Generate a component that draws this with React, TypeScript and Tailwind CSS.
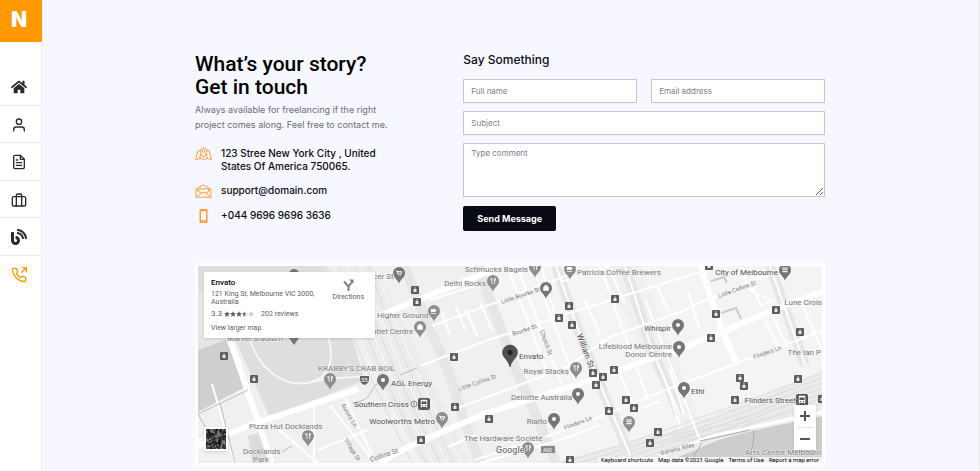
import React from "react";
import { FiBriefcase, FiFileText, FiPhoneOutgoing, FiUser } from "react-icons/fi";
import { FaBlog, FaHome } from "react-icons/fa";

const navItems = [
  { label: "Home", href: "#home", icon: FaHome },
  { label: "About", href: "#about", icon: FiUser },
  { label: "Resume", href: "#resume", icon: FiFileText },
  { label: "Portfolio", href: "#portfolio", icon: FiBriefcase },
  { label: "Blog", href: "#blog", icon: FaBlog },
  { label: "Contact", href: "#contact", icon: FiPhoneOutgoing, active: true },
];

const Sidebar = () => (
  <aside className="w-[42px] shrink-0 bg-white border-r border-[#ececf2]">
    <a
      href="#home"
      className="flex h-[42px] -mr-px items-center justify-center bg-[#ff9801] pr-1 pb-1 text-[21px] font-black leading-none text-white"
    >
      N
    </a>
    <nav className="mt-[26px] grid h-[225px] grid-rows-6">
      {navItems.map(({ label, href, icon: Icon, active }) => (
        <a
          key={label}
          href={href}
          aria-label={label}
          className={`flex items-center justify-center pt-[2px] pr-[3px] border-b border-[#e9e9ee] last:border-b-0 ${
            active ? "text-[#ff9801]" : "text-[#2b2b2b]"
          }`}
        >
          <Icon size={16} />
        </a>
      ))}
    </nav>
  </aside>
);

const MapIcon = () => (
  <svg width="17" height="14" viewBox="0 0 17 14" fill="none" stroke="#ff9d3c" strokeWidth="1">
    <path d="M5.3 3.2 2.8 3.8.7 12.6l4.2-1.2 3.6 1.2 3.6-1.2 4.2 1.2-2.1-8.8-2.5-.6M4.9 11.4l.6-4.6M12.1 11.4l-.6-4.6" />
    <path d="M8.5 10.5C6.9 8 5.4 6.300 5.400 4.200a3.100 3.100 0 0 1 6.200 0c0 2.100-1.500 3.800-3.100 6.300z" />
    <circle cx="8.5" cy="4.200" r="1.200" />
  </svg>
);

const MailIcon = () => (
  <svg width="17" height="14" viewBox="0 0 17 14" fill="none" stroke="#ff9d3c" strokeWidth="1">
    <path d="M1 5.200 8.500.8 16 5.200v8H1zM1 5.200l5 4M16 5.200l-5 4M1 13.200l5-4 2.500-1 2.500 1 5 4" />
    <path d="M3.500 7V4.800h10V7" />
  </svg>
);

const PhoneIcon = () => (
  <svg width="17" height="14" viewBox="0 0 17 14" fill="#ff9d3c">
    <path fillRule="evenodd" d="M5.500 0h6a1 1 0 0 1 1 1v12a1 1 0 0 1-1 1h-6a1 1 0 0 1-1-1V1a1 1 0 0 1 1-1zM6 2.200v9.100h5V2.200zM7.700 12.200h1.600v1H7.700z" />
  </svg>
);

const contacts = [
  { icon: MapIcon, text: "123 Stree New York City , United States Of America 750065." },
  { icon: MailIcon, text: "support@domain.com" },
  { icon: PhoneIcon, text: "+044 9696 9696 3636" },
];

const Intro = () => (
  <div className="col-span-5">
    <h2 className="font-[Roboto,sans-serif] text-[21px] font-medium leading-[23px] text-black">
      What’s your story?
      <br />
      Get in touch
    </h2>
    <p className="mt-[3px] max-w-[200px] text-[9px] leading-[15px] text-[#6c6d74]">
      Always available for freelancing if the right project comes along. Feel free to contact me.
    </p>
    <ul className="mt-[15px] flex flex-col gap-[11px]">
      {contacts.map(({ icon: Icon, text }) => (
        <li key={text} className="flex items-start gap-[9px] text-[10px] font-medium leading-[13px] text-[#0b0b13]">
          <span className="shrink-0">
            <Icon />
          </span>
          <span className="max-w-[164px]">{text}</span>
        </li>
      ))}
    </ul>
  </div>
);

const field =
  "block w-full border border-[#c6c7cb] bg-white px-[7px] text-[8px] text-[#333] placeholder:text-[#78828c] outline-none";

const ContactForm = () => (
  <form className="col-span-7" onSubmit={(e) => e.preventDefault()}>
    <h4 className="text-[12px] font-medium leading-[14px] text-[#0b0b13]">Say Something</h4>
    <div className="mt-3 grid grid-cols-2 gap-x-[14px] gap-y-2">
      <input className={`${field} h-6`} type="text" aria-label="Full name" placeholder="Full name" />
      <input className={`${field} h-6`} type="email" aria-label="Email address" placeholder="Email address" />
      <input className={`${field} col-span-2 h-6`} type="text" aria-label="Subject" placeholder="Subject" />
      <textarea
        className={`${field} col-span-2 h-[54px] py-1 leading-[11px]`}
        aria-label="Type comment"
        placeholder="Type comment"
      />
    </div>
    <button type="submit" className="mt-[9px] h-[25px] rounded-[2px] bg-[#0a0a14] px-[14px] text-[9px] font-bold text-white">
      Send Message
    </button>
  </form>
);

// everything on the map is placed in one coordinate space
const minorRoads = [
  "M432 326 548 283 575 272",
  "M420 366 480 343 560 316 690 275 720 266",
  "M455 409 517 386 567 367 610 337 680 312 706 300 790 266",
  "M545 437 605 415 650 396 700 377 735 364 780 347 822 331",
  "M560 282 610 266",
  "M507 266 548 374",
  "M517 266 562 385",
  "M532 266 575 380",
  "M541 266 556 318",
  "M600 266 648 400",
  "M645 300 700 440",
  "M662 372 680 425",
  "M670 370 684 415",
  "M740 372 752 405",
  "M765 320 780 350",
  "M773 317 788 347",
  "M740 266 750 290 770 300",
  "M753 288 761 305 775 300",
  "M800 300 822 350",
  "M688 292 700 330",
  "M656 285 668 310",
  "M610 270 625 305",
  "M585 300 600 335",
  "M620 374 635 410 660 402",
  "M480 463 560 440 600 425",
  "M448 447 475 435",
  "M475 460 515 446",
  "M456 306 465 330",
  "M466 309 477 336",
  "M480 302 492 330",
  "M442 313 450 335",
  "M430 300 480 284",
  "M330 405 375 463",
  "M345 398 372 455",
  "M314 400 314 463",
  "M270 422 318 463",
  "M318 450 368 430",
  "M212 384 235 463",
  "M198 440 230 432",
];

const mainRoads = [
  "M380 463 400 451 453 427 490 412 595 379 690 345 725 331 775 309 822 292",
  "M198 446 250 425 358 389",
  "M222 320 237 360 272 463",
  "M376 317 480 275 500 266",
  "M700 266 722 330 737 364",
];

const greyRoads = [
  "M478 266 512 360 540 425 556 463",
  "M404 266 430 330 448 370 464 420 480 463",
  "M556 266 580 335 597 377 630 455",
  "M625 266 652 350 680 415",
  "M770 266 805 365",
];

const trainStops = [
  [415, 290], [417, 302], [454, 357], [569, 306], [559, 318], [572, 325], [615, 299], [224, 356],
  [254, 379], [455, 407], [489, 419], [421, 440], [593, 373], [603, 377], [596, 385], [609, 411],
  [626, 400], [634, 408], [658, 432], [650, 443], [570, 460], [709, 266], [716, 314], [711, 338],
  [776, 310], [800, 332], [614, 370], [740, 378], [744, 386], [735, 400], [798, 379], [822, 399],
];

type Kind = "food" | "cup" | "bag" | "dot" | "cart" | "bank";

const pins: { x: number; y: number; kind: Kind; dark?: boolean }[] = [
  { x: 399, y: 274, kind: "cart", dark: true },
  { x: 434, y: 312, kind: "cup" },
  { x: 420, y: 328, kind: "bag" },
  { x: 493, y: 282, kind: "food" },
  { x: 535, y: 268, kind: "food" },
  { x: 570, y: 270, kind: "cup" },
  { x: 546, y: 289, kind: "bag", dark: true },
  { x: 785, y: 271, kind: "bank", dark: true },
  { x: 678, y: 326, kind: "dot", dark: true },
  { x: 679, y: 348, kind: "dot", dark: true },
  { x: 576, y: 369, kind: "food" },
  { x: 578, y: 395, kind: "dot", dark: true },
  { x: 554, y: 420, kind: "dot", dark: true },
  { x: 684, y: 389, kind: "dot", dark: true },
  { x: 442, y: 419, kind: "cart" },
  { x: 330, y: 380, kind: "food" },
  { x: 383, y: 381, kind: "dot", dark: true },
  { x: 308, y: 437, kind: "food" },
  { x: 528, y: 449, kind: "food" },
  { x: 629, y: 423, kind: "bank" },
];

const glyphs: Record<Kind, React.ReactNode> = {
  food: <path d="M-2-3v2.500M-1-3v6M1.500-3v6M2.300-3v3" stroke="#fff" strokeWidth="0.800" fill="none" />,
  cup: <path d="M-3-2h4.500v1h1v1h-1v1h-4.500zM-3 2h5v.800h-5z" fill="#fff" />,
  bag: <path d="M-2.500-1h5v3.500h-5zM-1.300-1v-1.500h2.600V-1" fill="#fff" stroke="#fff" strokeWidth="0.500" />,
  dot: <circle r="2" fill="#fff" />,
  cart: <path d="M-3-2h1.300l.7 3h3l.8-2.300h-4M-.8 2.500h.5M1.500 2.500h.5" stroke="#fff" strokeWidth="1" fill="none" />,
  bank: <path d="M-3-2.500h6v1h-6zM-2.500-.8h5v1h-5zM-2.500 1h5v1.200h-5z" fill="#fff" />,
};

const labels: { x: number; y: number; text: string; end?: boolean; dark?: boolean }[] = [
  { x: 373, y: 279, text: "cer St" },
  { x: 377, y: 318, text: "Higher Ground" },
  { x: 372, y: 334, text: "utlet Centre" },
  { x: 528, y: 272, text: "Schmucks Bagels", end: true },
  { x: 486, y: 286, text: "Delhi Rocks", end: true },
  { x: 577, y: 275, text: "Patricia Coffee Brewers" },
  { x: 778, y: 275, text: "City of Melbourne", end: true, dark: true },
  { x: 822, y: 305, text: "Lune Crois", end: true },
  { x: 671, y: 331, text: "Whispir", end: true, dark: true },
  { x: 672, y: 349, text: "Lifeblood Melbourne", end: true },
  { x: 672, y: 357, text: "Donor Centre", end: true },
  { x: 821, y: 355, text: "The Ian P", end: true },
  { x: 519, y: 359, text: "Envato", dark: true },
  { x: 569, y: 374, text: "Royal Stacks", end: true },
  { x: 572, y: 400, text: "Deloitte Australia", end: true },
  { x: 547, y: 424, text: "Rialto", end: true },
  { x: 691, y: 394, text: "Ethi", dark: true },
  { x: 796, y: 403, text: "Flinders Street", end: true, dark: true },
  { x: 318, y: 371, text: "KRABBY'S CRAB BOIL" },
  { x: 391, y: 386, text: "AGL Energy", dark: true },
  { x: 354, y: 407, text: "Southern Cross", dark: true },
  { x: 435, y: 424, text: "Woolworths Metro", end: true, dark: true },
  { x: 249, y: 429, text: "Pizza Hut Docklands" },
  { x: 243, y: 454, text: "Docklands" },
  { x: 253, y: 462, text: "Park" },
  { x: 464, y: 441, text: "The Hardware Société" },
  { x: 821, y: 455, text: "Arts Centre Melbourn", end: true },
  { x: 227, y: 341, text: "Marvel Stadium" },
];

const streets = [
  { x: 502, y: 304, r: -19, text: "Little Bourke St" },
  { x: 513, y: 336, r: -19, text: "Bourke St" },
  { x: 459, y: 391, r: -19, text: "Little Collins St" },
  { x: 719, y: 298, r: -20, text: "Little Collins St" },
  { x: 754, y: 359, r: -19, text: "Flinders Ln" },
  { x: 565, y: 430, r: -21, text: "Flinders Ln" },
  { x: 540, y: 331, r: 71, text: "Church St" },
  { x: 341, y: 405, r: 60, text: "Aurora Ln" },
  { x: 344, y: 440, r: 58, text: "Village St" },
];

const StreetMap = () => (
  <svg
    viewBox="198 266 624 197"
    preserveAspectRatio="xMidYMid slice"
    className="block h-[197px] w-full bg-[#f0f0f0] font-[Roboto,sans-serif]"
    role="img"
    aria-label="Map of central Melbourne"
  >
    <rect x="198" y="266" width="624" height="197" fill="#f0f0f0" />
    <path d="M480 266 600 266 690 440 560 463 556 455 510 350z" fill="#f4f4f4" />
    <path d="M640 266H822V370L700 420z" fill="#f4f4f4" />
    <path d="M198 266H330L365 380 270 418 240 350 222 310 198 290z" fill="#dedede" />
    <path d="M198 350 230 338 247 386 198 412z" fill="#cfcfcf" />
    <path d="M198 290 222 300 230 338 198 350z" fill="#e5e5e5" />
    <path d="M248 436 262 432 275 463 252 463z" fill="#dcdcdc" />
    <path d="M250 340C262 376 290 388 312 382S334 350 326 332" fill="none" stroke="#f6f6f6" strokeWidth="2" />
    <path d="M310 382C340 376 350 378 372 376" fill="none" stroke="#f6f6f6" strokeWidth="2" />
    <path d="M324 266 376 266 470 463 420 463z" fill="#ececec" />
    {[0, 7, 14, 21, 28, 35, 42, 49].map((d) => (
      <path key={d} d={`M${326 + d} 266Q${355 + d} 345 ${374 + d} 385T${412 + d} 463`} fill="none" stroke={d % 2 ? "#fafafa" : "#dcdcdc"} strokeWidth="1" />
    ))}
    <path d="M552 463 690 426 822 372V412L710 441 665 463z" fill="#ebebeb" />
    {[0, 5, 10, 15, 20, 25].map((d) => (
      <path key={d} d={`M560 ${463 + d}C640 ${441 + d} 700 ${418 + d} 822 ${373 + d}`} fill="none" stroke="#dcdcdc" strokeWidth="1" />
    ))}
    <path d="M660 444 822 394M680 442 822 404M650 438 770 418" stroke="#dedede" fill="none" />
    <path d="M655 466 698 449C720 436 770 427 822 416V463z" fill="#cdcdcd" />
    <path d="M660 456 712 436 822 412" stroke="#fff" strokeWidth="3" fill="none" />
    <path d="M702 443 690 462M753 430C756 442 750 450 748 463M700 441 750 430" stroke="#aaa" fill="none" />
    {greyRoads.map((d) => (
      <path key={d} d={d} fill="none" stroke="#e6e6e6" strokeWidth="10" />
    ))}
    {minorRoads.map((d) => (
      <path key={d} d={d} fill="none" stroke="#fff" strokeWidth="2" />
    ))}
    {mainRoads.map((d) => (
      <path key={d} d={d} fill="none" stroke="#fff" strokeWidth="6" />
    ))}
    {greyRoads.slice(2).map((d) => (
      <path key={d} d={d} fill="none" stroke="#fff" strokeWidth="2" />
    ))}
    <path d="M198 414 248 390M220 403 235 463M198 414 208 432M352 403C378 400 366 384 385 381M400 375 417 368M282 452 292 446" stroke="#bbb" fill="none" />
    <path d="M711 281 724 277 727 283M721 313 736 308 741 319" stroke="#ccc" strokeWidth="2" fill="none" />

    {trainStops.map(([x, y]) => (
      <g key={`${x}-${y}`} transform={`translate(${x} ${y})`}>
        <rect x="-4" y="-4" width="8" height="8" rx="1" fill="#5d5d5d" />
        <path d="M-1.500-1h3v3h-3zM-.8-2.500h1.600v1h-1.600z" fill="#e8e8e8" />
      </g>
    ))}
    {pins.map(({ x, y, kind, dark }) => (
      <g key={`${x}-${y}`} transform={`translate(${x} ${y})`}>
        <path d="M0 10C-1 5-6 4-6-1A6 6 0 0 1 6-1C6 4 1 5 0 10z" fill={dark ? "#757575" : "#8e8e8e"} />
        <g transform="translate(0 -1)">{glyphs[kind]}</g>
      </g>
    ))}
    <path d="M289 338H299L294 345z" fill="#777" />
    <circle cx="294" cy="274" r="5" fill="#777" />
    <g>
      <path d="M510 367C508 359 502.500 358 502.500 352.500A7.500 7.500 0 0 1 517.500 352.500C517.500 358 512 359 510 367z" fill="#4f4f4f" stroke="#333" strokeWidth="0.500" />
      <circle cx="510" cy="352.500" r="2.500" fill="#222" />
    </g>
    {[[424, 404], [802, 400]].map(([x, y]) => (
      <g key={x} transform={`translate(${x} ${y})`}>
        <rect x="-6" y="-6" width="12" height="12" rx="2" fill="#555" />
        <path d="M-3-4h6v6.500h-6zM-2.500 3l-1 1.500M2.500 3l1 1.500" fill="#fff" stroke="#fff" strokeWidth="0.600" />
        <path d="M-2.500-2.500h5v2.500h-5zM-2 1h1v1h-1zM1 1h1v1h-1z" fill="#555" />
      </g>
    ))}
    <circle cx="414" cy="404" r="3" fill="none" stroke="#888" />
    <path d="M414 402v4" stroke="#888" />
    <path d="M360 376h9v4q-1 4-4.500 5q-3.500-1-4.500-5z" fill="#666" />
    <text x="361" y="382" fontSize="6" fill="#fff">55</text>
    <rect x="541" y="446" width="14" height="7" fill="#8a8a8a" />
    <text x="543" y="452" fontSize="5" fill="#fff">A60</text>

    <g fontSize="8" stroke="#f6f6f6" strokeWidth="1" strokeLinejoin="round" paintOrder="stroke">
      {labels.map(({ x, y, text, end, dark }) => (
        <text key={text} x={x} y={y} textAnchor={end ? "end" : "start"} fill={dark ? "#505050" : "#777"}>
          {text}
        </text>
      ))}
    </g>
    <g fontSize="6" fill="#777" stroke="#f6f6f6" strokeWidth="1" paintOrder="stroke">
      {streets.map(({ x, y, r, text }) => (
        <text key={`${x}-${text}`} transform={`translate(${x} ${y}) rotate(${r})`}>
          {text}
        </text>
      ))}
      <text transform="translate(371 462) rotate(-19)" fontSize="7">Collins St</text>
      <text transform="translate(661 455) rotate(-14)">Banana Alley</text>
      <text transform="translate(577 335) rotate(70)" fontSize="8" fill="#444">William St</text>
    </g>
    <text x="496" y="453" fontSize="9" fontWeight="500" fill="#777" stroke="#fff" strokeWidth="1" paintOrder="stroke">Google</text>
  </svg>
);

const Star = ({ fill }: { fill: string }) => (
  <svg width="6" height="6" viewBox="0 0 12 12" fill="#ccc">
    <path d="M6 .5l1.700 3.700 4 .5-3 2.700.8 4L6 9.400l-3.500 2 .8-4-3-2.700 4-.5z" />
    {fill !== "none" && <path d="M6 .5l1.700 3.700 4 .5-3 2.700.8 4L6 9.400l-3.500 2 .8-4-3-2.700 4-.5z" fill="#666" clipPath={fill === "half" ? "inset(0 50% 0 0)" : undefined} />}
  </svg>
);

const PlaceCard = () => (
  <div className="absolute left-[6px] top-[6px] flex h-[66px] w-[171px] justify-between bg-white px-[7px] py-[5px] font-[Roboto,sans-serif] text-[7px] leading-[8px] text-[#5c5c5c] shadow">
    <div>
      <h5 className="mt-px text-[8px] font-medium leading-[10px] text-black">Envato</h5>
      <p className="mt-[2px] w-[106px]">121 King St, Melbourne VIC 3000, Australia</p>
      <div className="mt-1 flex items-center">
        <span className="text-[8px]">3.3</span>
        <span className="ml-[2px] flex">
          {["full", "full", "full", "half", "none"].map((fill, i) => (
            <Star key={i} fill={fill} />
          ))}
        </span>
        <a href="#reviews" className="ml-[7px]">202 reviews</a>
      </div>
      <a href="#map" className="mt-[6px] block">View larger map</a>
    </div>
    <a href="#directions" className="mt-[2px] mr-1 flex flex-col items-center gap-[2px]">
      <svg width="11" height="12" viewBox="0 0 11 12" fill="none" stroke="#808080" strokeWidth="2">
        <path d="M5.500 12V7.500L9 3M5.500 7.500 1 2.500" />
        <path d="M6 .5h4.500V5z" fill="#808080" stroke="none" />
      </svg>
      Directions
    </a>
  </div>
);

// coarse satellite tile, deterministic noise
const tiles = Array.from({ length: 225 }, (_, i) => Math.floor(Math.abs(Math.sin(i * 12.9898) * 43758.5453)) % 7);
const shades = ["#222", "#333", "#111", "#4a4a4a", "#777", "#2b2b2b", "#8f8f8f"];

const SatelliteToggle = () => (
  <button
    type="button"
    aria-label="Show satellite imagery"
    className="absolute bottom-[12px] left-[6px] border-2 border-white bg-[#222] shadow"
  >
    <svg width="20" height="20" viewBox="2 2 11 11" className="block">
      <g transform="rotate(18 7.500 7.500)">
        {tiles.map((t, i) => (
          <rect key={i} x={i % 15} y={Math.floor(i / 15)} width="1" height="1" fill={shades[t]} />
        ))}
      </g>
    </svg>
  </button>
);

const ZoomControl = () => (
  <div className="absolute bottom-[13px] right-[6px] flex w-[22px] flex-col items-center bg-white shadow">
    <button type="button" aria-label="Zoom in" className="flex h-[22px] w-full items-center justify-center">
      <svg width="10" height="10" viewBox="0 0 10 10" stroke="#555" strokeWidth="2"><path d="M5 0v10M0 5h10" /></svg>
    </button>
    <span className="h-px w-4 bg-[#e2e2e2]" />
    <button type="button" aria-label="Zoom out" className="flex h-[22px] w-full items-center justify-center">
      <svg width="10" height="10" viewBox="0 0 10 10" stroke="#555" strokeWidth="2"><path d="M0 5h10" /></svg>
    </button>
  </div>
);

const MapPanel = () => (
  <section className="mt-8 border-[3px] border-white">
    <div className="relative overflow-hidden">
      <StreetMap />
      <PlaceCard />
      <SatelliteToggle />
      <ZoomControl />
      <div className="absolute bottom-0 right-0 flex gap-[5px] bg-[#f7f7f7]/90 px-[3px] font-[Roboto,sans-serif] text-[6px] leading-[6px] text-black">
        <button type="button">Keyboard shortcuts</button>
        <span>Map data ©2021 Google</span>
        <a href="#terms">Terms of Use</a>
        <a href="#report">Report a map error</a>
      </div>
    </div>
  </section>
);

export default function App() {
  return (
    <div className="flex min-h-screen bg-[#f7f7ff] font-[Inter,sans-serif]">
      <Sidebar />
      <main className="flex-1 border-r-2 border-[#efeff6] pt-[53px]">
        <div className="mx-auto max-w-[630px]">
          <div className="grid grid-cols-12 gap-x-[14px]">
            <Intro />
            <ContactForm />
          </div>
          <MapPanel />
        </div>
      </main>
    </div>
  );
}
